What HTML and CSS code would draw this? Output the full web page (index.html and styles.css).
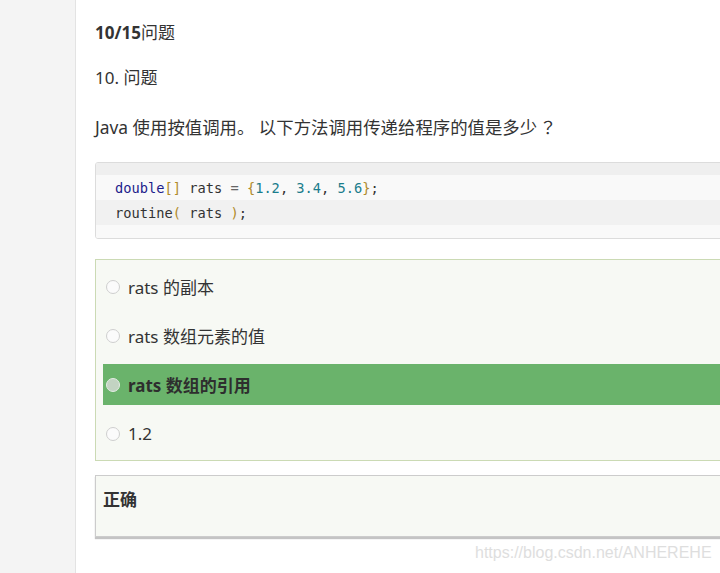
FILE: index.html
```html
<!DOCTYPE html>
<html lang="zh">
<head>
<meta charset="utf-8">
<title>问题</title>
<link rel="stylesheet" href="styles.css">
</head>
<body>
<div class="page">
  <aside class="sidebar"></aside>
  <main class="main">
    <div class="progress"><b>10/15</b>问题</div>
    <div class="qnum">10. 问题</div>
    <p class="question">Java 使用按值调用。 以下方法调用传递给程序的值是多少<span class="cjk">？</span></p>
    <div class="code">
      <div class="pad pad-top"></div>
      <div class="line light"><span class="kw">double</span><span class="br">[]</span> rats <span class="op">=</span> <span class="br">{</span><span class="num">1.2</span>, <span class="num">3.4</span>, <span class="num">5.6</span><span class="br">}</span>;</div>
      <div class="line dark">routine<span class="br">(</span> rats <span class="br">)</span>;</div>
      <div class="pad pad-bottom"></div>
    </div>
    <div class="options">
      <div class="option"><span class="radio"></span><span>rats 的副本</span></div>
      <div class="option"><span class="radio"></span><span>rats 数组元素的值</span></div>
      <div class="option selected"><span class="radio"></span><span>rats 数组的引用</span></div>
      <div class="option"><span class="radio"></span><span>1.2</span></div>
    </div>
    <div class="answer">正确</div>
  </main>
</div>
<div class="watermark">https://blog.csdn.net/ANHEREHE</div>
</body>
</html>
```

FILE: styles.css
```css
html, body {
  margin: 0;
  padding: 0;
  width: 720px;
  height: 573px;
  overflow: hidden;
  background: #ffffff;
}
body {
  position: relative;
  font-family: "Noto Sans", "Noto Sans CJK SC", sans-serif;
  color: #333333;
  font-size: 17px;
  text-spacing-trim: space-all;
}
.page {
  display: flex;
  height: 573px;
}
.sidebar {
  width: 75px;
  flex: none;
  background: #f4f4f4;
  border-right: 1px solid #e3e3e3;
}
.main {
  flex: none;
  width: 700px;
  padding: 21px 0 0 19px;
}
.progress {
  line-height: 24px;
  height: 24px;
}
.progress b {
  font-weight: 700;
}
.qnum {
  line-height: 24px;
  margin-top: 21px;
}
.question {
  margin: 25px 0 0 0;
  line-height: 24px;
  font-size: 17.4px;
}
.cjk {
  font-family: "Noto Sans CJK TC", sans-serif;
  display: inline-block;
  width: 1em;
  margin-left: 2px;
  text-align: center;
}
.code {
  margin-top: 23px;
  border: 1px solid #dcdcdc;
  border-radius: 3px;
  font-family: "DejaVu Sans Mono", monospace;
  font-size: 13.7px;
  color: #333;
  overflow: hidden;
}
.pad-top {
  height: 12px;
  background: #efefef;
}
.pad-bottom {
  height: 13px;
  background: #f9f9f9;
}
.line {
  height: 25px;
  line-height: 26px;
  padding-left: 19px;
  white-space: pre;
}
.line.light { background: #f9f9f9; }
.line.dark { background: #f1f1f1; }
.kw { color: #1d1d8c; }
.br { color: #b08a2a; }
.op { color: #666; }
.num { color: #1b7d8c; }
.options {
  margin-top: 20px;
  border: 1px solid #cbdab4;
  background: #f7f9f4;
  padding: 6px 0 6px 7px;
  display: flex;
  flex-direction: column;
  gap: 8px;
}
.option {
  height: 41px;
  display: flex;
  align-items: center;
  padding-left: 3px;
}
.radio {
  width: 12px;
  height: 12px;
  border-radius: 50%;
  border: 1px solid #cfcfcf;
  background: #fbfbfb;
  margin-right: 8px;
  flex: none;
}
.option.selected {
  background: #6ab36b;
  font-weight: 700;
  color: #2e2e2e;
}
.option.selected .radio {
  background: #c2d3c2;
  border: 1px solid #e4ece4;
}
.answer {
  margin-top: 14px;
  height: 60px;
  border: 1px solid #cccccc;
  background: #f7f9f4;
  box-shadow: 0 2px 1px #c4c4c4;
  font-weight: 700;
  padding-left: 7px;
  line-height: 48px;
}
.watermark {
  position: absolute;
  left: 475px;
  top: 543px;
  font-family: "Liberation Sans", Arial, sans-serif;
  font-size: 16px;
  line-height: 20px;
  color: #dedede;
}
```
